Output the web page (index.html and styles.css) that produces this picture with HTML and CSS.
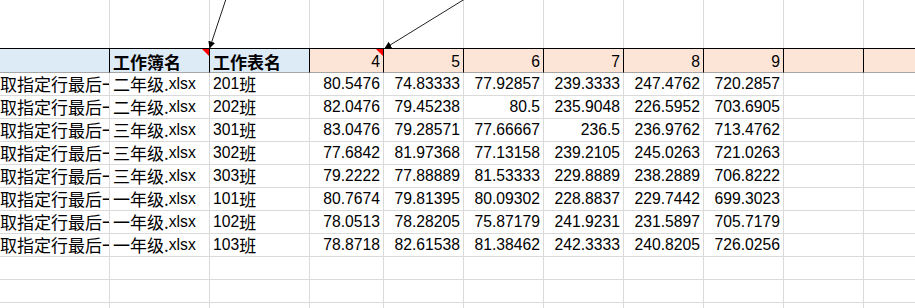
FILE: index.html
```html
<!DOCTYPE html>
<html lang="zh">
<head>
<meta charset="utf-8">
<title>Sheet</title>
<link rel="stylesheet" href="styles.css">
</head>
<body>
<div class="page">
  <div class="sheet">
    <div class="c top"></div><div class="c top"></div><div class="c top"></div><div class="c top"></div><div class="c top"></div><div class="c top"></div><div class="c top"></div><div class="c top"></div><div class="c top"></div><div class="c top"></div><div class="c top"></div>

    <div class="c hd blue"></div>
    <div class="c hd blue note"><span class="zh strong">工作簿名</span></div>
    <div class="c hd blue"><span class="zh strong">工作表名</span></div>
    <div class="c hd peach num note">4</div>
    <div class="c hd peach num">5</div>
    <div class="c hd peach num">6</div>
    <div class="c hd peach num">7</div>
    <div class="c hd peach num">8</div>
    <div class="c hd peach num">9</div>
    <div class="c hd peach"></div>
    <div class="c hd peach"></div>

    <div class="c clip"><span class="zh lead">获取指定行最后一行</span></div><div class="c"><span class="zh">二年级.</span>xlsx</div><div class="c">201<span class="zh">班</span></div><div class="c num">80.5476</div><div class="c num">74.83333</div><div class="c num">77.92857</div><div class="c num">239.3333</div><div class="c num">247.4762</div><div class="c num">720.2857</div><div class="c"></div><div class="c"></div>
    <div class="c clip"><span class="zh lead">获取指定行最后一行</span></div><div class="c"><span class="zh">二年级.</span>xlsx</div><div class="c">202<span class="zh">班</span></div><div class="c num">82.0476</div><div class="c num">79.45238</div><div class="c num">80.5</div><div class="c num">235.9048</div><div class="c num">226.5952</div><div class="c num">703.6905</div><div class="c"></div><div class="c"></div>
    <div class="c clip"><span class="zh lead">获取指定行最后一行</span></div><div class="c"><span class="zh">三年级.</span>xlsx</div><div class="c">301<span class="zh">班</span></div><div class="c num">83.0476</div><div class="c num">79.28571</div><div class="c num">77.66667</div><div class="c num">236.5</div><div class="c num">236.9762</div><div class="c num">713.4762</div><div class="c"></div><div class="c"></div>
    <div class="c clip"><span class="zh lead">获取指定行最后一行</span></div><div class="c"><span class="zh">三年级.</span>xlsx</div><div class="c">302<span class="zh">班</span></div><div class="c num">77.6842</div><div class="c num">81.97368</div><div class="c num">77.13158</div><div class="c num">239.2105</div><div class="c num">245.0263</div><div class="c num">721.0263</div><div class="c"></div><div class="c"></div>
    <div class="c clip"><span class="zh lead">获取指定行最后一行</span></div><div class="c"><span class="zh">三年级.</span>xlsx</div><div class="c">303<span class="zh">班</span></div><div class="c num">79.2222</div><div class="c num">77.88889</div><div class="c num">81.53333</div><div class="c num">229.8889</div><div class="c num">238.2889</div><div class="c num">706.8222</div><div class="c"></div><div class="c"></div>
    <div class="c clip"><span class="zh lead">获取指定行最后一行</span></div><div class="c"><span class="zh">一年级.</span>xlsx</div><div class="c">101<span class="zh">班</span></div><div class="c num">80.7674</div><div class="c num">79.81395</div><div class="c num">80.09302</div><div class="c num">228.8837</div><div class="c num">229.7442</div><div class="c num">699.3023</div><div class="c"></div><div class="c"></div>
    <div class="c clip"><span class="zh lead">获取指定行最后一行</span></div><div class="c"><span class="zh">一年级.</span>xlsx</div><div class="c">102<span class="zh">班</span></div><div class="c num">78.0513</div><div class="c num">78.28205</div><div class="c num">75.87179</div><div class="c num">241.9231</div><div class="c num">231.5897</div><div class="c num">705.7179</div><div class="c"></div><div class="c"></div>
    <div class="c clip"><span class="zh lead">获取指定行最后一行</span></div><div class="c"><span class="zh">一年级.</span>xlsx</div><div class="c">103<span class="zh">班</span></div><div class="c num">78.8718</div><div class="c num">82.61538</div><div class="c num">81.38462</div><div class="c num">242.3333</div><div class="c num">240.8205</div><div class="c num">726.0256</div><div class="c"></div><div class="c"></div>

    <div class="c"></div><div class="c"></div><div class="c"></div><div class="c"></div><div class="c"></div><div class="c"></div><div class="c"></div><div class="c"></div><div class="c"></div><div class="c"></div><div class="c"></div>
    <div class="c"></div><div class="c"></div><div class="c"></div><div class="c"></div><div class="c"></div><div class="c"></div><div class="c"></div><div class="c"></div><div class="c"></div><div class="c"></div><div class="c"></div>
    <div class="c"></div><div class="c"></div><div class="c"></div><div class="c"></div><div class="c"></div><div class="c"></div><div class="c"></div><div class="c"></div><div class="c"></div><div class="c"></div><div class="c"></div>
  </div>

  <svg class="arrows" width="915" height="308" viewBox="0 0 915 308" aria-hidden="true">
    <defs>
      <marker id="head" markerUnits="userSpaceOnUse" markerWidth="8" markerHeight="8" refX="7" refY="3.5" orient="auto">
        <path d="M0,0 L7,3.5 L0,7 z" fill="#000"/>
      </marker>
    </defs>
    <line x1="226" y1="-1" x2="209.5" y2="48.5" stroke="#222" stroke-width="1" marker-end="url(#head)"/>
    <line x1="464" y1="-0.5" x2="384.5" y2="48.5" stroke="#222" stroke-width="1" marker-end="url(#head)"/>
  </svg>
</div>
</body>
</html>
```

FILE: styles.css
```css
html, body {
  margin: 0;
  padding: 0;
  background: #ffffff;
  overflow: hidden;
}

.page {
  position: relative;
  width: 915px;
  height: 308px;
  overflow: hidden;
  font-family: "Liberation Sans", "Noto Sans CJK SC", sans-serif;
  font-size: 15.7px;
  color: #000;
}

.sheet {
  display: grid;
  grid-template-columns: 110px 100px 100px 74px repeat(7, 80px);
  grid-template-rows: 48px 25px repeat(11, 23px);
}

.c {
  box-sizing: border-box;
  border-right: 1px solid #dadada;
  border-bottom: 1px solid #dadada;
  display: flex;
  align-items: flex-end;
  padding: 0 3px 1px 3px;
  line-height: 20px;
  white-space: nowrap;
  position: relative;
}

.c.top {
  border-bottom: none;
}

.c.hd {
  border-top: 1px solid #000;
  border-right: 1px solid #000;
  border-bottom: 1px solid #a6a6a6;
  padding-bottom: 0;
}

.blue {
  background: #ddebf7;
}

.peach {
  background: #fce4d6;
}

.num {
  justify-content: flex-end;
}

.zh {
  font-family: "Noto Sans CJK SC", sans-serif;
  font-size: 17px;
  line-height: 20px;
}

.strong {
  font-weight: 700;
}

.clip {
  padding-left: 0;
  overflow: hidden;
}

.lead {
  margin-left: -17px;
}

.note::after {
  content: "";
  position: absolute;
  top: 0;
  right: 0;
  width: 0;
  height: 0;
  border-top: 7px solid #ff0000;
  border-left: 7px solid transparent;
}

.arrows {
  position: absolute;
  left: 0;
  top: 0;
  pointer-events: none;
}
```
